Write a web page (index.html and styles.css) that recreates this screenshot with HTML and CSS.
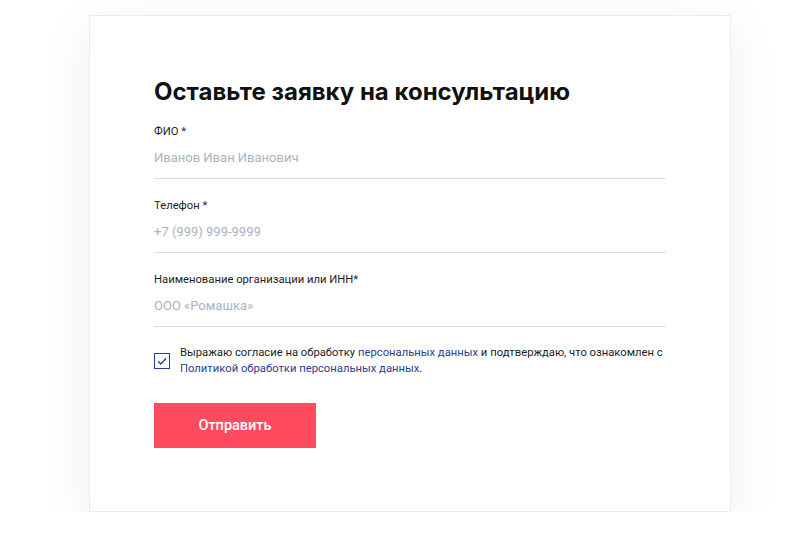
FILE: index.html
```html
<!DOCTYPE html>
<html lang="ru">
<head>
<meta charset="utf-8">
<title>Заявка на консультацию</title>
<link rel="stylesheet" href="styles.css">
</head>
<body>
<div class="card">
  <h1 class="title">Оставьте заявку на консультацию</h1>
  <form class="form">
    <label class="field">
      <span class="label">ФИО *</span>
      <input class="input" type="text" placeholder="Иванов Иван Иванович">
    </label>
    <label class="field">
      <span class="label">Телефон *</span>
      <input class="input" type="text" placeholder="+7 (999) 999-9999">
    </label>
    <label class="field">
      <span class="label">Наименование организации или ИНН*</span>
      <input class="input" type="text" placeholder="ООО «Ромашка»">
    </label>
    <div class="consent">
      <span class="checkbox">
        <svg width="12" height="12" viewBox="0 0 12 12"><path d="M2 6.2 L4.8 9 L10.2 3.2" fill="none" stroke="#2b3d8f" stroke-width="1.3"/></svg>
      </span>
      <p class="consent-text">Выражаю согласие на обработку <a class="link" href="#">персональных данных</a> и подтверждаю, что ознакомлен с <a class="link" href="#">Политикой обработки персональных данных</a>.</p>
    </div>
    <button class="submit" type="button">Отправить</button>
  </form>
</div>
</body>
</html>
```
FILE: styles.css
```css
html, body {
  margin: 0;
  padding: 0;
  background: #ffffff;
}
body {
  font-family: Roboto, "Liberation Sans", sans-serif;
  color: #1d1d1f;
  padding: 15px 0 0 89px;
}
.card {
  box-sizing: border-box;
  width: 642px;
  height: 497px;
  background: #fff;
  border: 1px solid #ececec;
  box-shadow: 0 12px 50px rgba(0, 0, 0, 0.07);
  padding: 61px 64px 0 64px;
}
.title {
  margin: 0;
  font-family: Inter, "Open Sans", sans-serif;
  font-weight: 700;
  font-size: 24px;
  line-height: 30px;
  color: #111;
  letter-spacing: 0;
}
.form {
  display: flex;
  flex-direction: column;
  margin-top: 17px;
  width: 512px;
}
.field {
  display: flex;
  flex-direction: column;
  margin-bottom: 19px;
}
.label {
  font-size: 11.25px;
  line-height: 16px;
  color: #1d1d1f;
}
.input {
  border: 0;
  border-bottom: 1px solid #d6dee8;
  outline: none;
  padding: 7px 0 11px;
  margin: 0;
  font-family: Roboto, "Liberation Sans", sans-serif;
  font-size: 13px;
  line-height: 20px;
  height: 39px;
  box-sizing: border-box;
  color: #1d1d1f;
  background: transparent;
}
.input::placeholder {
  color: #a9b3c1;
}
.consent {
  display: flex;
  align-items: center;
  gap: 10px;
  margin-top: -1px;
}
.checkbox {
  box-sizing: border-box;
  width: 16px;
  height: 16px;
  flex: none;
  border: 1.4px solid #2b3d8f;
  display: flex;
  align-items: center;
  justify-content: center;
}
.consent-text {
  margin: 0;
  font-size: 11.25px;
  line-height: 16px;
  color: #1d1d1f;
}
.link {
  color: #2a4190;
  text-decoration: none;
}
.submit {
  margin-top: 26px;
  width: 162px;
  height: 45px;
  border: 0;
  background: #ff4b5f;
  color: #fff;
  font-family: Roboto, "Liberation Sans", sans-serif;
  font-weight: 500;
  font-size: 14.5px;
  cursor: pointer;
  padding: 0;
}
```
